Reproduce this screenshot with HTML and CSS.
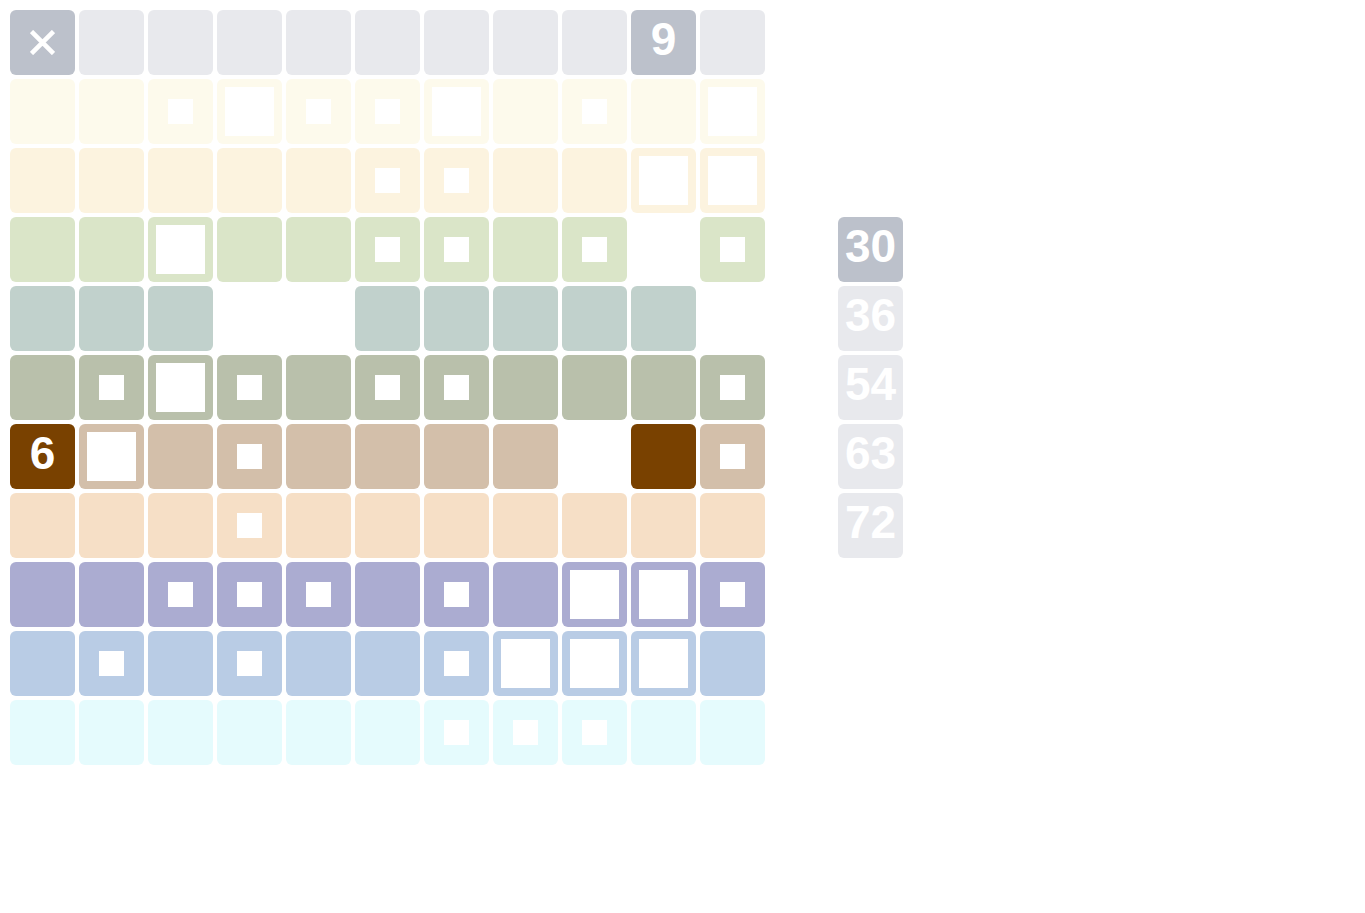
FILE: index.html
```html
<!DOCTYPE html>
<html lang="en">
<head>
    <meta charset="UTF-8">
    <title>Board</title>
    <link rel="stylesheet" href="styles.css">
</head>
<body>

    <div class="page">
        <div class="board" id="board"></div>
    </div>

    <script>
        // one string per row, 13 columns: . plain, s small mark, L large mark, _ empty, D dark, N side number
        const rows = [
            { cls: 'r0', cells: 'X........9.__' },
            { cls: 'r1', cells: '..sLssL.s.L__' },
            { cls: 'r2', cells: '.....ss..LL__' },
            { cls: 'r3', cells: '..L..ss.s_s_N' },
            { cls: 'r4', cells: '...__.....__N' },
            { cls: 'r5', cells: '.sLs.ss...s_N' },
            { cls: 'r6', cells: '6L.s...._Ds_N' },
            { cls: 'r7', cells: '...s......._N' },
            { cls: 'r8', cells: '..sss.s.LLs__' },
            { cls: 'r9', cells: '.s.s..sLLL.__' },
            { cls: 'r10', cells: '......sss..__' }
        ];

        const sideNumbers = ['30', '36', '54', '63', '72'];
        let sideIndex = 0;

        const board = document.getElementById('board');

        rows.forEach(row => {
            for (const ch of row.cells) {
                const cell = document.createElement('div');
                cell.className = 'cell ' + row.cls;

                if (ch === '_') {
                    cell.className = 'cell empty';
                } else if (ch === 's') {
                    cell.innerHTML = '<span class="mark-small"></span>';
                } else if (ch === 'L') {
                    cell.innerHTML = '<span class="mark-large"></span>';
                } else if (ch === 'D') {
                    cell.classList.add('dark');
                } else if (ch === '6') {
                    cell.classList.add('dark', 'num');
                    cell.textContent = '6';
                } else if (ch === '9') {
                    cell.classList.add('picked', 'num');
                    cell.textContent = '9';
                } else if (ch === 'X') {
                    cell.classList.add('picked');
                    cell.innerHTML = '<svg width="25" height="25" viewBox="0 0 25 25"><path d="M1.5 1.5 L23.5 23.5 M23.5 1.5 L1.5 23.5" stroke="#fff" stroke-width="4.6"/></svg>';
                } else if (ch === 'N') {
                    cell.className = 'cell r0 num';
                    if (sideIndex === 0) cell.classList.add('picked');
                    cell.textContent = sideNumbers[sideIndex++];
                }

                board.appendChild(cell);
            }
        });
    </script>

</body>
</html>
```

FILE: styles.css
```css
body {
    margin: 0;
    font-family: "Liberation Sans", Arial, sans-serif;
    background: #ffffff;
}

.page {
    width: 1989px;
    min-height: 954px;
    padding: 10px;
}

.board {
    display: grid;
    grid-template-columns: repeat(13, 65px);
    grid-auto-rows: 65px;
    gap: 4px;
}

.cell {
    box-sizing: border-box;
    border-radius: 6px;
    display: flex;
    align-items: center;
    justify-content: center;
    color: #ffffff;
}

.cell.num {
    font-size: 46px;
    font-weight: bold;
    line-height: 1;
    padding-bottom: 8px;
}

.cell.empty {
    background: transparent;
}

.mark-small {
    width: 25px;
    height: 25px;
    background: #ffffff;
}

.mark-large {
    width: 49px;
    height: 49px;
    background: #ffffff;
}

.r0 { background-color: #e8e9ed; }
.r1 { background-color: #fdfaec; }
.r2 { background-color: #fcf3df; }
.r3 { background-color: #dae5c8; }
.r4 { background-color: #c1d1cc; }
.r5 { background-color: #b9c0ab; }
.r6 { background-color: #d3bfaa; }
.r7 { background-color: #f6dfc6; }
.r8 { background-color: #abacd1; }
.r9 { background-color: #b9cce5; }
.r10 { background-color: #e5fbfd; }

.cell.picked {
    background-color: #bcc1cb;
}

.cell.dark {
    background-color: #794100;
}
```
